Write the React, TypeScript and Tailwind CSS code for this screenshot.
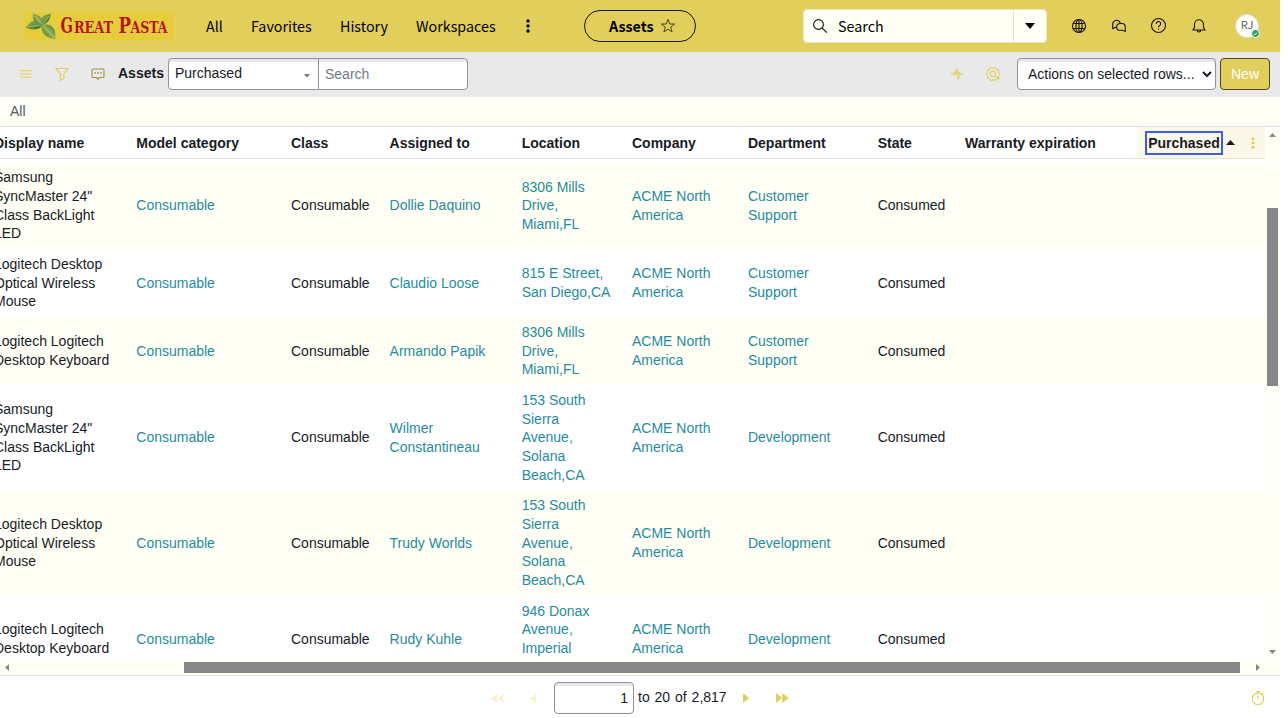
import React from "react";

const COLS =
  "grid grid-cols-[136.3px_154.7px_98.6px_132.1px_110.3px_116px_129.7px_87.3px_173px_127px]";

type Row = {
  name: string[];
  assigned: string[];
  location: string[];
  department: string[];
  height: string;
  tint: boolean;
};

const samsung = ["Samsung", "SyncMaster 24\"", "Class BackLight", "LED"];
const mouse = ["Logitech Desktop", "Optical Wireless", "Mouse"];
const keyboard = ["Logitech Logitech", "Desktop Keyboard"];
const miami = ["8306 Mills", "Drive,", "Miami,FL"];
const solana = ["153 South", "Sierra", "Avenue,", "Solana", "Beach,CA"];
const support = ["Customer", "Support"];

const rows: Row[] = [
  { name: samsung, assigned: ["Dollie Daquino"], location: miami, department: support, height: "h-[86.67px]", tint: true },
  { name: mouse, assigned: ["Claudio Loose"], location: ["815 E Street,", "San Diego,CA"], department: support, height: "h-[68px]", tint: false },
  { name: keyboard, assigned: ["Armando Papik"], location: miami, department: support, height: "h-[68px]", tint: true },
  { name: samsung, assigned: ["Wilmer", "Constantineau"], location: solana, department: ["Development"], height: "h-[105.33px]", tint: false },
  { name: mouse, assigned: ["Trudy Worlds"], location: solana, department: ["Development"], height: "h-[105.33px]", tint: true },
  { name: keyboard, assigned: ["Rudy Kuhle"], location: ["946 Donax", "Avenue,", "Imperial", "Beach,CA"], department: ["Development"], height: "h-[86.67px]", tint: false },
];

function Lines({ text, link, className = "" }: { text: string[]; link?: boolean; className?: string }) {
  return (
    <div className={`whitespace-nowrap ${link ? "text-[#278b9e]" : "text-[#181b25]"} ${className}`}>
      {text.map((t) => (
        <div key={t}>{t}</div>
      ))}
    </div>
  );
}

function Logo() {
  return (
    <svg width="150" height="28" viewBox="0 0 150 28" className="ml-6 shrink-0">
      <defs>
        <linearGradient id="leafA" x1="0" y1="0" x2="1" y2="1">
          <stop offset="0" stopColor="#a9bd68" />
          <stop offset="0.5" stopColor="#688f3a" />
          <stop offset="1" stopColor="#3f6a22" />
        </linearGradient>
        <linearGradient id="leafB" x1="1" y1="0" x2="0" y2="1">
          <stop offset="0" stopColor="#47752a" />
          <stop offset="0.5" stopColor="#8fae59" />
          <stop offset="1" stopColor="#3a6420" />
        </linearGradient>
      </defs>
      <rect width="150" height="28" fill="#e7cd3b" />
      <path d="M19 13C15 18.500 8 18.500 1.500 15.500C5 14 5 9 10 8.500C14.500 8.500 18 10 19 13Z" fill="url(#leafA)" />
      <path d="M18 12.500C10 12 8 7 9 1.500C14 3 19.500 5 19 12Z" fill="url(#leafB)" />
      <path d="M17.500 12.500C16 7 17.500 2.500 27 1.800C26 6 25.500 11 18.500 13Z" fill="url(#leafA)" />
      <path d="M17.500 13C24 10.500 29.500 14 31 19C31.500 22 31 25 32 27C24 26.500 16.500 22.500 17.500 13Z" fill="url(#leafB)" />
      <path d="M4 15C9 14 13 13.500 17 13M10.500 4L17 11.500M25 4L18.500 12M19 14C23 18 27 22 30.500 26" stroke="#c3d38d" strokeWidth=".6" fill="none" />
      <g fill="#b5151d" fontFamily="'DejaVu Serif Condensed', 'DejaVu Serif', serif" fontWeight="700">
        <text x="36.500" y="21" fontSize="21.500" textLength="12.500" lengthAdjust="spacingAndGlyphs">G</text>
        <text x="50" y="21" fontSize="17.500" textLength="39" lengthAdjust="spacingAndGlyphs">REAT</text>
        <text x="94.500" y="21" fontSize="21.500" textLength="12.500" lengthAdjust="spacingAndGlyphs">P</text>
        <text x="106.500" y="21" fontSize="17.500" textLength="37" lengthAdjust="spacingAndGlyphs">ASTA</text>
      </g>
    </svg>
  );
}

function TopBar() {
  return (
    <header className="flex h-[52px] shrink-0 items-center bg-[#e2ce5b] font-['Noto_Sans_CJK_SC',sans-serif] text-[14.3px] text-black">
      <Logo />
      <nav className="flex items-center whitespace-nowrap">
        <span className="ml-8 w-[45px]">All</span>
        <span className="w-[89px]">Favorites</span>
        <span className="w-[76px]">History</span>
        <span className="w-[108px]">Workspaces</span>
        <svg width="8" height="16" viewBox="0 0 8 16">
          <circle cx="4" cy="3" r="1.700" />
          <circle cx="4" cy="8" r="1.700" />
          <circle cx="4" cy="13" r="1.700" />
        </svg>
      </nav>
      <div className="ml-[52px] flex h-8 w-28 shrink-0 items-center rounded-full border border-[#151515] pl-6">
        <b className="w-[51px]">Assets</b>
        <svg width="16" height="16" viewBox="0 0 16 16" fill="none" stroke="#4b441f">
          <path d="M8 1.400L9.700 6H14.700L10.700 9.100L12.100 14L8 11.200L3.900 14L5.300 9.100L1.300 6H6.300Z" />
        </svg>
      </div>
      <div className="ml-[107px] flex h-[34px] w-[244px] shrink-0 items-center rounded border border-[#eae5c9] bg-[#fffff5]">
        <svg width="16" height="16" viewBox="0 0 16 16" fill="none" stroke="#151515" strokeWidth="1.100" className="ml-2">
          <circle cx="6.500" cy="6.500" r="4.900" />
          <path d="M10 10L15 14.700" />
        </svg>
        <span className="ml-2.5 w-[175px]">Search</span>
        <div className="flex h-full flex-1 items-center justify-center border-l border-[#e2e1d5]">
          <svg width="10" height="6" viewBox="0 0 10 6">
            <path d="M0 0H10L5 6Z" />
          </svg>
        </div>
      </div>
      <div className="ml-6 flex items-center">
        <svg width="16" height="16" viewBox="0 0 16 16" fill="none" stroke="#151515" strokeWidth="1.100">
          <circle cx="8" cy="8" r="6.500" />
          <ellipse cx="8" cy="8" rx="3.100" ry="6.500" />
          <path d="M2.300 5.500H13.700M2.300 10.500H13.700M8 1.500V14.500" />
        </svg>
        <svg width="16" height="16" viewBox="0 0 16 16" fill="none" stroke="#151515" strokeWidth="1.100" className="ml-6">
          <path d="M5.500 9.500H4L1.700 10.600V6.500A4 4 0 0 1 5.500 2.200A4 4 0 0 1 9.300 5.300" />
          <path d="M9 5.500H11A3.500 3.500 0 0 1 14.300 9V13.400L11.800 12.300H9A3.400 3.400 0 0 1 9 5.500Z" />
        </svg>
        <svg width="16" height="16" viewBox="0 0 16 16" fill="none" stroke="#151515" strokeWidth="1.100" className="ml-6">
          <circle cx="7.500" cy="7.500" r="7" />
          <path d="M5.300 5.900A2.200 2.200 0 1 1 8.500 7.700Q7.500 8.200 7.500 9.200" />
          <circle cx="7.500" cy="11.200" r=".6" fill="#151515" stroke="none" />
        </svg>
        <svg width="16" height="16" viewBox="0 0 16 16" fill="none" stroke="#151515" strokeWidth="1.100" className="ml-6">
          <path d="M3.500 9.500V6.200A4.500 4.500 0 0 1 12.500 6.200V9.500L14 12H2L3.500 9.500ZM6.300 12.300A1.700 1.700 0 0 0 9.700 12.300" />
        </svg>
        <div className="relative ml-7 flex size-6 items-center justify-center rounded-full border border-[#dedccb] bg-[#fffff5] pb-[3px] text-[11px] leading-none text-[#555e68]">
          RJ
          <svg width="9" height="9" viewBox="0 0 9 9" className="absolute -right-0.5 -bottom-px">
            <circle cx="4.500" cy="4.500" r="4" fill="#2f9e68" stroke="#fffff5" />
            <path d="M2.800 4.600L4 5.800L6.200 3.500" fill="none" stroke="#fff" strokeWidth=".9" />
          </svg>
        </div>
      </div>
    </header>
  );
}

const field = "h-8 border border-[#8f90a2] bg-white shadow-[inset_0_3px_0_#e9e9e9]";

function ToolBar() {
  return (
    <div className="flex h-[45px] shrink-0 items-center bg-[#e9e9e9] pb-px text-[14px] text-[#181b25]">
      <svg width="16" height="16" viewBox="0 0 16 16" className="ml-[18px]" stroke="#e2ce5b" strokeWidth="1">
        <path d="M2 4.700H13.500M2 8H13.500M2 11.200H13.500" />
      </svg>
      <svg width="16" height="16" viewBox="0 0 16 16" className="ml-5" fill="none" stroke="#e2ce5b" strokeWidth="1.200">
        <path d="M2 2.500H14L9.800 8V12.500L6.500 14.300V8Z" />
      </svg>
      <svg width="16" height="16" viewBox="0 0 16 16" className="ml-5" fill="none" stroke="#a19242" strokeWidth="1.100">
        <path d="M3 3H13Q14 3 14 4V10.500Q14 11.500 13 11.500H9.700L8 13.200L6.300 11.500H3Q2 11.500 2 10.500V4Q2 3 3 3Z" />
        <path d="M4.200 7H5.800M7.200 7H8.800M10.200 7H11.800" strokeWidth="1.600" />
      </svg>
      <b className="ml-3 w-[50px] pb-px">Assets</b>
      <div className={`flex w-[151px] items-center justify-between rounded-l pr-2 pl-1.5 ${field}`}>
        <span className="pb-px">Purchased</span>
        <svg width="6" height="4" viewBox="0 0 6 4" className="mt-1">
          <path d="M0 0H6L3 3.600Z" fill="#72788a" />
        </svg>
      </div>
      <div className={`-ml-px flex w-[150px] items-center rounded-r pt-px pl-1.5 text-[#72788a] ${field}`}>Search</div>
      <div className="flex-1" />
      <svg width="16" height="16" viewBox="0 0 16 16" fill="none" stroke="#e2ce5b" strokeWidth="1.100">
        <path d="M1.500 8H4.500L5.500 5.500L6.500 9.500L8 2.500L9.300 13.500L10.500 6.500L11.500 8H14.500" />
      </svg>
      <svg width="16" height="16" viewBox="0 0 16 16" fill="none" stroke="#e2ce5b" strokeWidth="1.100" className="ml-5">
        <path d="M11 13L10.300 14.500L8 13.900L5.700 14.500L4.700 12.500L2.400 11.800L2.500 9.600L1.200 8L2.500 6L2.500 3.900L4.800 3.300L6 1.400L8 2.200L10.300 1.400L11.300 3.300L13.500 3.900L13.500 6L14.800 8L14 9.500" strokeLinejoin="round" />
        <circle cx="8" cy="8" r="2.700" />
        <circle cx="13" cy="12" r="1.700" fill="#e2ce5b" stroke="none" />
      </svg>
      <div className={`ml-4 flex w-[199px] items-center rounded pt-px pl-2.5 ${field}`}>
        <span className="w-[170px] whitespace-nowrap">Actions on selected rows...</span>
        <svg width="10" height="7" viewBox="0 0 10 7" className="ml-1 shrink-0">
          <path d="M1 1L5 5L9 1" fill="none" stroke="#181b25" strokeWidth="2" />
        </svg>
      </div>
      <div className="mr-2.5 ml-1 flex h-8 w-[50px] items-center justify-center rounded border border-[#4f4820] bg-[#e2ce5b] pt-px text-white">
        New
      </div>
    </div>
  );
}

function HeaderRow() {
  return (
    <div className={`${COLS} h-8 shrink-0 items-center border-b border-[#dddfe8] bg-white font-bold whitespace-nowrap`}>
      <span className="-ml-1.5">Display name</span>
      <span>Model category</span>
      <span>Class</span>
      <span>Assigned to</span>
      <span>Location</span>
      <span>Company</span>
      <span>Department</span>
      <span>State</span>
      <span>Warranty expiration</span>
      <div className="flex h-8 items-center border-b border-[#ebe6cf] bg-[#fcf8e9] pl-[7px]">
        <span className="flex h-6 w-[78px] items-center justify-center border-2 border-[#3d5fdc] pt-px">Purchased</span>
        <svg width="9" height="5" viewBox="0 0 9 5" className="ml-[3px]">
          <path d="M0 5H9L4.500 0Z" fill="#181b25" />
        </svg>
        <svg width="4" height="12" viewBox="0 0 4 12" fill="#e2ce5b" className="ml-4">
          <circle cx="2" cy="1.700" r="1.500" />
          <circle cx="2" cy="6" r="1.500" />
          <circle cx="2" cy="10.300" r="1.500" />
        </svg>
      </div>
    </div>
  );
}

function Grid() {
  return (
    <div className="flex h-[533px] shrink-0 text-[14px] leading-[18.67px] text-[#181b25]">
      <div className="flex w-[1265px] flex-col overflow-hidden bg-white">
        <HeaderRow />
        <div className="mt-[3.4px] shrink-0">
          {rows.map((r, i) => (
            <div key={i} className={`${COLS} ${r.height} items-center ${r.tint ? "bg-[#fffff5]" : "bg-white"}`}>
              <Lines text={r.name} className="-ml-1.5" />
              <Lines text={["Consumable"]} link />
              <Lines text={["Consumable"]} />
              <Lines text={r.assigned} link />
              <Lines text={r.location} link />
              <Lines text={["ACME North", "America"]} link />
              <Lines text={r.department} link />
              <Lines text={["Consumed"]} />
            </div>
          ))}
        </div>
      </div>
      <div className="flex w-[15px] flex-col items-center bg-[#fffff5]">
        <svg width="7" height="4" viewBox="0 0 7 4" className="mt-1.5">
          <path d="M0 4H7L3.500 0Z" fill="#878787" />
        </svg>
        <div className="mt-[71px] h-[178px] w-[11px] bg-[#878787]" />
        <svg width="7" height="4" viewBox="0 0 7 4" className="mt-auto mb-[6px]">
          <path d="M0 0H7L3.500 4Z" fill="#878787" />
        </svg>
      </div>
    </div>
  );
}

function Footer() {
  return (
    <footer className="flex flex-1 items-center border-t border-[#e2e2e5] bg-white pt-0.5 text-[14px] text-[#181b25]">
      <svg width="13" height="9" viewBox="0 0 13 9" fill="#f8f1d0" className="ml-[491px]">
        <path d="M6 0V9L0 4.500ZM12.500 0V9L6.500 4.500Z" />
      </svg>
      <svg width="6" height="9" viewBox="0 0 6 9" fill="#f8f1d0" className="ml-[26px]">
        <path d="M6 0V9L0 4.500Z" />
      </svg>
      <div className={`ml-[18px] flex w-20 items-center justify-end rounded pt-px pr-[5px] ${field}`}>1</div>
      <span className="ml-1 w-[88px] pb-px whitespace-nowrap [word-spacing:1px]">to 20 of 2,817</span>
      <svg width="6" height="10" viewBox="0 0 6 10" fill="#e2ce5b" className="ml-[17px]">
        <path d="M0 0V10L6 5Z" />
      </svg>
      <svg width="13" height="10" viewBox="0 0 13 10" fill="#e2ce5b" className="ml-[27px]">
        <path d="M0 0V10L6.300 5ZM6.300 0V10L12.600 5Z" />
      </svg>
      <svg width="16" height="16" viewBox="0 0 16 16" fill="none" stroke="#e2ce5b" strokeWidth="1.200" className="mr-3.5 ml-auto">
        <circle cx="8" cy="8.800" r="5.700" />
        <path d="M8 5.500V9M6 1.600H10M8 1.600V3M12.200 3.200L13.500 4.400" />
      </svg>
    </footer>
  );
}

export default function App() {
  return (
    <div className="h-[718px] w-[1288px] overflow-hidden bg-white font-['Liberation_Sans',Arial,sans-serif]">
      <main className="flex h-full w-[1280px] flex-col">
        <TopBar />
        <ToolBar />
        <div className="flex h-[30px] shrink-0 items-center border-b border-[#dddfe8] bg-[#fffff5] pl-2.5 text-[14px] text-[#555b68]">
          All
        </div>
        <Grid />
        <div className="flex h-[15px] shrink-0 items-center bg-[#fffff5]">
          <svg width="4" height="7" viewBox="0 0 4 7" className="ml-[5px]">
            <path d="M4 0V7L0 3.500Z" fill="#878787" />
          </svg>
          <div className="ml-[175px] h-[11px] w-[1056px] bg-[#878787]" />
          <svg width="4" height="7" viewBox="0 0 4 7" className="ml-4">
            <path d="M0 0V7L4 3.500Z" fill="#878787" />
          </svg>
        </div>
        <Footer />
      </main>
    </div>
  );
}
